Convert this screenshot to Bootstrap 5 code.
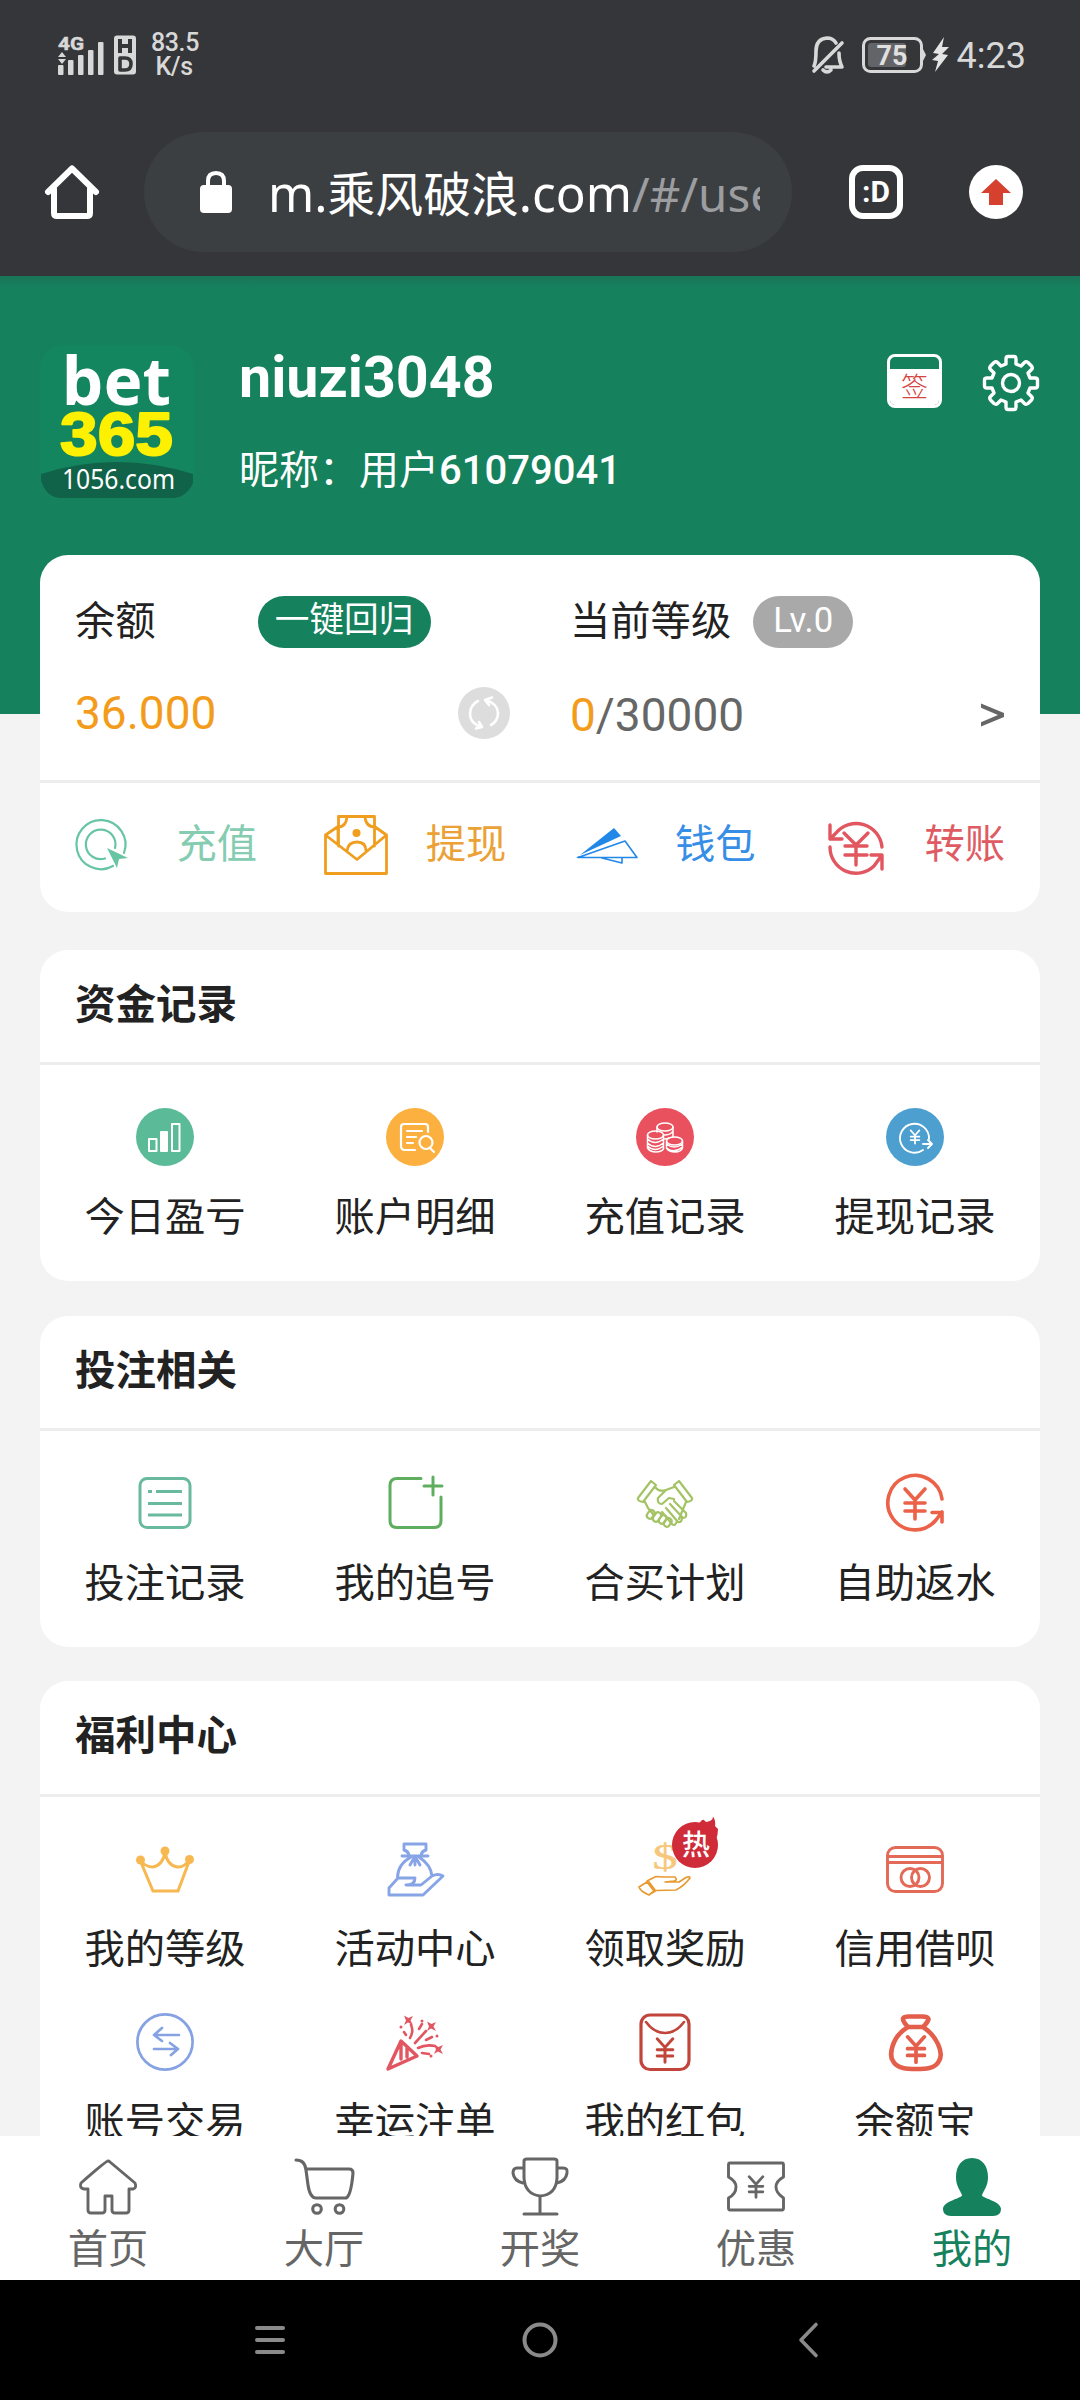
<!DOCTYPE html>
<html lang="zh-CN">
<head>
<meta charset="utf-8">
<meta name="viewport" content="width=device-width, initial-scale=1">
<title>我的</title>
<link href="https://cdn.jsdelivr.net/npm/bootstrap@5.3.0/dist/css/bootstrap.min.css" rel="stylesheet">
<style>
:root{--brand:#15815d}
body{font-family:Roboto,"Noto Sans CJK SC",sans-serif;font-size:40.3px;line-height:1.5;color:#222;background:#f3f3f3}
svg{display:block;overflow:visible;fill:none;stroke-linecap:round;stroke-linejoin:round;flex-shrink:0}
.screen{width:1080px;height:2400px}
.chrome-top{height:276px;background:#35363a}
.status{height:132px;padding:0 54px 0 58px;color:#d8d8d8}
.status-left,.status-right{height:109px}
.net-speed{font-size:25px;line-height:24px;width:46px;margin-left:15px;font-weight:500;letter-spacing:-.4px}
.clock{font-size:36px;line-height:40px;margin-left:8px;padding-top:2px}
.tools{height:120px;padding:0 57px 0 45px}
.url-pill{width:648px;height:120px;border-radius:60px;background:#3c3f42;margin-left:45px;padding:0 31px 0 56px;color:#fff}
.url-text{width:492px;margin-left:36px;padding-top:2px;font:400 49.5px/70px "Noto Sans","Noto Sans CJK SC",sans-serif}
.url-text .han{font-size:47.8px}
.url-text .path{color:#9b9da0;font-size:47.5px}
.tab-count{width:54px;height:54px;border:6px solid #fff;border-radius:14px;font:700 30px/36px Roboto,sans-serif;color:#fff;margin-left:57px}
.page-body{height:1860px}
.hero{height:438px;background:linear-gradient(#1a7458 0,var(--brand) 12px);padding:69px 40px 0;color:#fff}
.who{margin-left:45px}
.uname{font-size:57.4px;font-weight:700;line-height:66px;margin-top:0}
.nick{font-size:40px;line-height:60px;margin-top:30px}
.nick b{font-weight:500}
.hero-icons{gap:40px;margin-top:9px}
.sign{width:55px;height:54px;border:3px solid #fff;border-radius:8px;overflow:hidden}
.sign-head{height:12px}
.sign-body{background:#fff;color:#d5453f;font-size:27px;line-height:39px;font-weight:300;height:38px}
.panel{background:#fff;border-radius:28px;margin:0 40px 35px}
.wallet{height:357px;margin-top:-159px;margin-bottom:38px;padding-top:41px}
.wallet-cols{height:187px;border-bottom:3px solid #ededed;padding:0 36px 0 35px}
.wl{width:435px;margin-right:60px}
.line-a{height:52px}
.line-b{height:60px;margin-top:35px;font-size:46px;line-height:60px}
.pill{height:52px;line-height:49px;border-radius:26px;font-size:34.7px;color:#fff;text-align:center}
.pill-back{width:173px;background:var(--brand);margin-left:102px}
.pill-lv{width:100px;background:#a9a9a9;margin-left:22px}
.amt{color:#f39c1c}
.gry{color:#666}
.acts{height:129px;padding:0 35px}
.act{width:182px;height:124px}
.panel-title{height:115px;border-bottom:3px solid #ededed;padding:1px 35px 0;font-size:40.5px;font-weight:700;line-height:109px}
.tall{height:116px}
.grid-body{padding-top:43px}
.cell{padding-bottom:33px}
.cell span{margin-top:22px;line-height:60px;height:60px}
.ico{width:58px;height:58px}
.tabbar{height:144px;background:#fff;color:#666}
.tabbar svg{stroke:#666;margin-top:3px}
.tabbar .cap{line-height:60px;margin-top:-3px}
.tabbar .on{color:var(--brand)}
.sysbar{height:120px;background:#000}
.sysbar svg{stroke:#8a8a8a}
.sys-menu{margin-right:236px}
.sys-back{margin-left:236px}
.logo-t{font-family:"Noto Sans",sans-serif;stroke:none}
</style>
</head>
<body>
<svg width="0" height="0" class="position-absolute"><defs>
<symbol id="yen" viewBox="0 0 22 32" overflow="visible"><path d="M1 1 11 12 21 1M11 12V31M1 15H21M1 23H21"/></symbol>
</defs></svg>
<div class="screen d-flex flex-column overflow-hidden">
 <header class="chrome-top">
  <div class="status d-flex justify-content-between">
   <div class="status-left d-flex align-items-center">
    <svg width="46" height="40" viewBox="0 0 46 40"><g fill="#d8d8d8"><text x="0" y="15" font-size="18" font-weight="700" textLength="26" lengthAdjust="spacingAndGlyphs" font-family="Roboto" stroke="#d8d8d8" stroke-width=".5">4G</text><path d="M4 17 8 22H0zM0 24H8L4 29z"/><rect y="30" width="5.5" height="10" rx="1"/><rect x="10" y="25" width="5.5" height="15" rx="1"/><rect x="20" y="20" width="5.5" height="20" rx="1"/><rect x="30" y="15" width="5.5" height="25" rx="1"/><rect x="40" y="7" width="5.5" height="33" rx="1"/></g></svg>
    <svg class="ms-2" width="24" height="40" viewBox="-2 0 24 40"><rect y="0.5" width="22" height="39" rx="3" fill="#d8d8d8"/><path d="M6 4V18M16 4V18M6 11H16" stroke="#35363a" stroke-width="4" stroke-linecap="butt"/><path d="M6 23V35H11Q17 35 17 29 17 23 11 23Z" stroke="#35363a" stroke-width="3.6"/></svg>
    <div class="net-speed text-center">83.5<br>K/s</div>
   </div>
   <div class="status-right d-flex align-items-center">
    <svg width="34" height="38" viewBox="0 0 34 38" stroke="#d8d8d8" stroke-width="3.6"><path d="M3 30Q5 26 5 15 5 3 16 2 22 2 25 7M28 17Q28 25 31 31H15M3 35 31 7M12 34Q16 38 20 34"/></svg>
    <svg class="ms-3" width="66" height="38" viewBox="0 0 66 38"><rect x="2.5" y="2.5" width="58" height="33" rx="7" stroke="#d8d8d8" stroke-width="3"/><rect x="7" y="7" width="38" height="24" rx="3" fill="#636467"/><path d="M62 13 65 19 62 25z" fill="#d8d8d8"/><text x="31" y="29" text-anchor="middle" font-family="Roboto" font-size="27" font-weight="700" fill="#e0e0e0">75</text></svg>
    <svg class="ms-1" width="18" height="36" viewBox="0 0 18 36"><path d="M13 0 2 16 8 17 1 23 7 24 4 35 17 18 11 17 18 10 11 10z" fill="#e4e4e4"/></svg>
    <div class="clock">4:23</div>
   </div>
  </div>
  <div class="tools d-flex align-items-center">
   <svg width="54" height="54" viewBox="0 0 54 54" stroke="#fff" stroke-width="6"><path d="M3 27 27 3.500 51 27M9 24V48Q9 51 12 51H42Q45 51 45 48V24"/></svg>
   <div class="url-pill d-flex align-items-center">
    <svg width="32" height="42" viewBox="0 0 32 42"><rect y="14" width="32" height="28" rx="4" fill="#fff"/><path d="M8 16V10Q8 2 16 2 24 2 24 10V16" stroke="#fff" stroke-width="4"/></svg>
    <div class="url-text text-nowrap overflow-hidden">m.<span class="han">乘风破浪</span>.com<span class="path">/#/use</span></div>
   </div>
   <div class="tab-count d-flex align-items-center justify-content-center">:D</div>
   <svg class="ms-auto" width="54" height="54" viewBox="0 0 54 54"><circle cx="27" cy="27" r="27" fill="#fff"/><path d="M27 14 42 28H34V40H20V28H12z" fill="#d5402f"/></svg>
  </div>
 </header>

 <main class="page-body overflow-hidden">
  <section class="hero d-flex align-items-start">
   <svg width="154" height="154" viewBox="0 0 154 154"><rect width="154" height="153" rx="24" fill="#14865f"/><path d="M1 129Q77 105 153 129V138Q146 153 132 153H22Q6 153 1 135Z" fill="#106249"/><g class="logo-t"><text x="22" y="60" font-size="67" font-weight="700" fill="#fff" textLength="109" lengthAdjust="spacingAndGlyphs">bet</text><text x="20" y="110" font-family="Liberation Sans" font-size="62" font-weight="700" fill="#fdf000" style="stroke:#fdf000" stroke-width="2" textLength="113" lengthAdjust="spacingAndGlyphs">365</text><text x="22" y="144" font-size="27" fill="#fff" textLength="113" lengthAdjust="spacingAndGlyphs">1056.com</text></g></svg>
   <div class="who"><div class="uname">niuzi3048</div><div class="nick">昵称：用户<b>61079041</b></div></div>
   <div class="hero-icons ms-auto d-flex">
    <div class="sign text-center"><div class="sign-head"></div><div class="sign-body">签</div></div>
    <svg width="58" height="58" viewBox="-29 -29 58 58" stroke="#fff" stroke-width="3.400"><circle r="8.500"/><path d="M-5-19V-24Q-5-26.500-3-26.500H3Q5-26.500 5-24V-19L10-17 13.500-20.500Q15-22 17-20.500L20.500-17Q22-15 20.500-13.500L17-10 19-5H24Q26.500-5 26.500-3V3Q26.500 5 24 5H19L17 10 20.500 13.500Q22 15 20.500 17L17 20.500Q15 22 13.500 20.500L10 17 5 19V24Q5 26.500 3 26.500H-3Q-5 26.500-5 24V19L-10 17-13.500 20.500Q-15 22-17 20.500L-20.500 17Q-22 15-20.500 13.500L-17 10-19 5H-24Q-26.500 5-26.500 3V-3Q-26.500-5-24-5H-19L-17-10-20.500-13.500Q-22-15-20.500-17L-17-20.500Q-15-22-13.500-20.500L-10-17Z"/></svg>
   </div>
  </section>

  <section class="panel wallet position-relative">
   <div class="wallet-cols d-flex">
    <div class="wl">
     <div class="line-a d-flex align-items-center"><span>余额</span><span class="pill pill-back">一键回归</span></div>
     <div class="line-b d-flex align-items-center justify-content-between amt"><span>36.000</span><svg width="52" height="52" viewBox="0 0 52 52" stroke="#fff" stroke-width="2.600"><circle cx="26" cy="26" r="26" fill="#ddd" stroke="none"/><path d="M20 14Q12 18 12 27 12 36 23 40M18 41.500 24 40 21 35M33 38Q40 34 40 26 40 17 28 13M34 10.500 27 13 31 18"/></svg></div>
    </div>
    <div class="flex-grow-1">
     <div class="line-a d-flex align-items-center"><span>当前等级</span><span class="pill pill-lv">Lv.0</span></div>
     <div class="line-b d-flex align-items-center justify-content-between gry"><span class="pt-1"><span class="amt">0</span>/30000</span><svg class="mt-1" width="23" height="26" viewBox="0 0 23 26"><path d="M0 1.500V5.800L17 13 0 20.200V24.500L23 14.900V11.100z" fill="#666"/></svg></div>
    </div>
   </div>
   <div class="acts d-flex justify-content-between">
    <div class="act d-flex align-items-center justify-content-between" style="color:#86ccb1"><svg width="54" height="52" viewBox="0 0 54 52" stroke="#68c5a4" stroke-width="2.200"><path d="M49 34A24.500 24.500 0 1 0 38 47M40 29A14.800 14.800 0 1 0 30 39.500"/><path d="M32 29 53 39 44 40 42 49z" fill="#68c5a4" stroke="none"/></svg><span>充值</span></div>
    <div class="act d-flex align-items-center justify-content-between" style="color:#eba136"><svg width="64" height="60" viewBox="0 0 64 60" stroke="#f09e20" stroke-width="2.800" stroke-linejoin="miter"><path d="M1.500 20V58.500H62.500V20L33 44.500 1.500 20 14 11.500V28M62.500 20 50.500 11.500V28M14.500 31V1.500H50.500V31M14 12Q22 12 23 2M51 12Q42 12 41 2M23 36Q24 27 33 27 42 27 42 36"/><circle cx="32.500" cy="18" r="4" fill="#f09e20" stroke="none"/></svg><span>提现</span></div>
    <div class="act d-flex align-items-center justify-content-between" style="color:#378ee6"><svg width="64" height="40" viewBox="-2 -2 64 40"><path d="M4 28 38 1 45 9zM0 31 3 29 10 30z" fill="#2288e8"/><path d="M2 30.500 49 14 61 30.500zM26 31 46 36V31" stroke="#2288e8" stroke-width="1.600"/></svg><span>钱包</span></div>
    <div class="act d-flex align-items-center justify-content-between" style="color:#df5b63"><svg width="60" height="56" viewBox="-5 -3 60 56" stroke="#e25660" stroke-width="3.400"><path d="M2 27A26 26 0 0 0 46 46M54 27A26 26 0 0 0 8 13M2 5V19H14M2 19 8 13M43 35H54V49M54 35 46 46M16 13 28 25 40 13M28 25V45M17 26H39M17 35H39"/></svg><span>转账</span></div>
   </div>
  </section>

  <section class="panel">
   <div class="panel-title">资金记录</div>
   <div class="grid-body row g-0">
    <div class="cell col-3 d-flex flex-column align-items-center"><svg class="ico" viewBox="0 0 58 58" stroke="#fff" stroke-width="2"><circle cx="29" cy="29" r="29" fill="#5bbb99" stroke="none"/><rect x="13" y="31" width="7.500" height="12"/><rect x="25" y="24" width="6" height="19" fill="#fff"/><rect x="36" y="16" width="7.500" height="27"/></svg><span>今日盈亏</span></div>
    <div class="cell col-3 d-flex flex-column align-items-center"><svg class="ico" viewBox="0 0 58 58" stroke="#fff" stroke-width="2.200"><circle cx="29" cy="29" r="29" fill="#fbb03f" stroke="none"/><path d="M29 42H19Q15 42 15 38V19Q15 16 18 16H39Q42 16 42 19V24M21 23H36M21 29H30M21 35H27M44 40 48 44"/><circle cx="40" cy="34.500" r="6.500"/></svg><span>账户明细</span></div>
    <div class="cell col-3 d-flex flex-column align-items-center"><svg class="ico" viewBox="0 0 58 58" stroke="#fff" stroke-width="1.500"><circle cx="29" cy="29" r="29" fill="#e9515e" stroke="none"/><ellipse cx="29" cy="19" rx="8" ry="4"/><path d="M37 19V29M21 19V24M28 27Q35 27 37 23M28 31Q31 31 33 30"/><ellipse cx="19.500" cy="27" rx="8" ry="4"/><path d="M11.500 27V40Q14 44 20 44 25 44 27.500 41V27M11.500 31Q19 38 27.500 31M11.500 35Q19 42 27.500 35M11.500 38Q19 45 27.500 38"/><ellipse cx="38.500" cy="33" rx="8" ry="4"/><path d="M30.500 33V40Q33 44 39 44 45 44 46.500 40V33M30.500 36Q38 42 46.500 36M30.500 40Q38 46 46.500 39"/></svg><span>充值记录</span></div>
    <div class="cell col-3 d-flex flex-column align-items-center"><svg class="ico" viewBox="0 0 58 58" stroke="#fff" stroke-width="1.900"><circle cx="29" cy="29" r="29" fill="#4d9fd0" stroke="none"/><path d="M43 31A14.500 14.500 0 1 0 37 42M37 36H46M42 32 46 36 42 40"/><use href="#yen" x="23" y="22" width="12" height="14" stroke-width="4"/></svg><span>提现记录</span></div>
   </div>
  </section>

  <section class="panel mb-0">
   <div class="panel-title">投注相关</div>
   <div class="grid-body row g-0">
    <div class="cell col-3 d-flex flex-column align-items-center"><svg class="ico" viewBox="0 0 58 58" stroke="#68b99e" stroke-width="3"><rect x="4" y="4.500" width="50" height="49" rx="7"/><path d="M12 17.500H16M20 17.500H46M12 29.500H46M12 41H46" stroke-linecap="butt"/></svg><span>投注记录</span></div>
    <div class="cell col-3 d-flex flex-column align-items-center"><svg class="ico" viewBox="0 0 58 58" stroke="#5fae60" stroke-width="3" stroke-linecap="butt"><path d="M35 4.500H11Q4 4.500 4 11.500V46.500Q4 53.500 11 53.500H48Q55 53.500 55 46.500V23M38 12H56M47 3V21"/></svg><span>我的追号</span></div>
    <div class="cell col-3 d-flex flex-column align-items-center"><svg class="ico" viewBox="0 0 58 58" stroke="#a3c364" stroke-width="2.200"><path d="M2 24 15 7 20 11 7 28Q1 27 2 24ZM56 24 43 7 38 11 51 28Q57 27 56 24ZM20 14Q23 18 30 16L38 13M9 28 12 34 17 40M50 28 43 45M30 16 22 24Q21 30 26 30L33 24 38 25M38 27 50 39Q51 44 47 44L34 30M46 43Q46 49 42 48L30 34M41 47Q39 53 36 50L26 38"/><rect x="12" y="36" width="6" height="9" rx="3" transform="rotate(35 15 40)"/><rect x="18" y="38" width="6" height="10" rx="3" transform="rotate(35 21 43)"/><rect x="24" y="41" width="6" height="9" rx="3" transform="rotate(35 27 45)"/><rect x="29" y="44" width="6" height="9" rx="3" transform="rotate(35 32 48)"/></svg><span>合买计划</span></div>
    <div class="cell col-3 d-flex flex-column align-items-center"><svg class="ico" viewBox="0 0 58 58" stroke="#eb6249" stroke-width="3.600"><path d="M56 25A27.200 27.200 0 1 0 50 46L56 38M46 38.500H56V48"/><use href="#yen" x="18" y="14" width="22" height="32"/></svg><span>自助返水</span></div>
   </div>
  </section>

  <section class="panel mb-0" style="margin-top:34px">
   <div class="panel-title tall">福利中心</div>
   <div class="grid-body row g-0">
    <div class="cell col-3 d-flex flex-column align-items-center"><svg class="ico" viewBox="0 0 58 58" stroke="#f8b851" stroke-width="3"><path d="M4 20 17 51H42L54 19Q48 28 41 27 31 25 29 12 27 25 17 27 9 27 4 20Z" stroke-linejoin="miter"/><g fill="#f8b851" stroke="none"><circle cx="4.500" cy="20" r="4.500"/><circle cx="29" cy="11" r="4.500"/><circle cx="53.500" cy="19.500" r="4.500"/></g></svg><span>我的等级</span></div>
    <div class="cell col-3 d-flex flex-column align-items-center"><svg class="ico" viewBox="0 0 58 58" stroke="#86a4e6" stroke-width="2.900" stroke-linejoin="miter"><path d="M23 15Q22 11 18 10V4H40V10Q36 11 35 15M16 16H42M25 17Q12 24 11.500 37M33 17Q45 25 46 36M29 17V25M28 18 24 25M30 18 34 25M3 55V48L12 38H29Q29 45 20 45H35L46 36Q52 33 57 36L37 55Z"/></svg><span>活动中心</span></div>
    <div class="cell col-3 d-flex flex-column align-items-center"><svg class="ico" viewBox="0 0 58 58" stroke="#e89a30" stroke-width="1.700"><text x="29" y="29" text-anchor="middle" font-family="Liberation Serif" font-size="35" textLength="25" lengthAdjust="spacingAndGlyphs" fill="#f7c77b" stroke="#f7c77b" stroke-width=".4">$</text><path d="M11 41 20 36.500 27 37H39Q42 40 38 41L29 42H43L50 37.500Q54 36 54 38 48 46 40 50L20 50.500 16 53M11 42 3 47Q4 51 13 55L18 51ZM13 42 19 50"/><circle cx="59" cy="5" r="23" fill="#cf2b38" stroke="none"/><path d="M63-16Q66-21 68-20L70-18Q77-19 77-23.500 80-19 79-14L82-11Q82-5 80-1L60-14z" fill="#cf2b38" stroke="none"/><text x="60" y="15" text-anchor="middle" font-size="28" font-weight="500" fill="#fff" stroke="none">热</text></svg><span>领取奖励</span></div>
    <div class="cell col-3 d-flex flex-column align-items-center"><svg class="ico" viewBox="0 0 58 58" stroke="#e26a57" stroke-width="2.900"><rect x="1.500" y="7.500" width="55" height="44" rx="8"/><path d="M2 16.500H56M2 22.500H56"/><circle cx="24" cy="37.500" r="9"/><circle cx="34.500" cy="37.500" r="9"/></svg><span>信用借呗</span></div>
    <div class="cell col-3 d-flex flex-column align-items-center"><svg class="ico" viewBox="0 0 58 58" stroke="#86a2e3" stroke-width="2.700"><circle cx="29" cy="29" r="27.600"/><path d="M43 22H18L26 15M18 22 26 28M18 36H42L34 30M42 36 35 42"/></svg><span>账号交易</span></div>
    <div class="cell col-3 d-flex flex-column align-items-center"><svg class="ico" viewBox="0 0 58 58" stroke="#e25661" stroke-width="3.400"><path d="M2 56 15 28 31 43ZM15 30V46M21 35V44"/><path d="M24 25Q28 18 25 12M29 30 40 18M32 35Q40 31 49 33M18 19 20 22M33 16 36 11M40 27 46 24M36 40 43 41" stroke-width="2.600"/><g fill="#e25661" stroke="none"><path id="spark" d="M18 2.500 22.500 5 27 3 24.500 7.500 27 12 22 9.500 18 12 20 7.500z"/><use href="#spark" x="23" y="6"/><use href="#spark" x="30" y="29"/><circle cx="15" cy="14" r="1.500"/><circle cx="36" cy="8" r="1.500"/><circle cx="51" cy="23" r="1.500"/><circle cx="45" cy="43" r="1.500"/></g></svg><span>幸运注单</span></div>
    <div class="cell col-3 d-flex flex-column align-items-center"><svg class="ico" viewBox="0 0 58 58" stroke="#c2453b" stroke-width="3.200"><rect x="5" y="2" width="48" height="54.500" rx="9"/><path d="M10 9Q18 20 29 20 40 20 48 9" stroke-width="2.600"/><use href="#yen" x="19" y="25" width="20" height="25" stroke-width="3.800"/></svg><span>我的红包</span></div>
    <div class="cell col-3 d-flex flex-column align-items-center"><svg class="ico" viewBox="0 0 58 58" stroke="#e45f4b" stroke-width="4.600"><path d="M22 14Q17 9 17 5.500 18 3.500 23 3.500H36Q42 3.500 42.500 6 42 9 37 14ZM22 14C5 24 3 43 7 48 11 56 22 56 30 56 39 56 49 56 53 48 58 40 51 23 37 14"/><use href="#yen" x="20" y="23" width="20" height="27" stroke-width="4.400"/></svg><span>余额宝</span></div>
   </div>
  </section>
 </main>

 <nav class="tabbar d-flex">
  <div class="flex-fill w-25 d-flex flex-column align-items-center pt-3"><svg width="58" height="68" viewBox="0 -2 58 68" stroke-width="2.900"><path d="M29 4Q27 4 2 26 0 31 5 32H9V53Q9 56 12 56H23Q26 56 26 53V39H33V53Q33 56 36 56H47Q50 56 50 53V32H54Q58 31 56 26L31 5Q30 4 29 4Z"/></svg><span class="cap">首页</span></div>
  <div class="flex-fill w-25 d-flex flex-column align-items-center pt-3"><svg width="60" height="68" viewBox="0 -2 60 68" stroke-width="3.100"><path d="M2 3Q11 3 12 13L14 28Q16 41 22 41H52Q57 39 59 16 59 12 55 12H13"/><circle cx="23" cy="52" r="4.300"/><circle cx="45.500" cy="52" r="4.300"/></svg><span class="cap">大厅</span></div>
  <div class="flex-fill w-25 d-flex flex-column align-items-center pt-3"><svg width="58" height="68" viewBox="0 -2 58 68" stroke-width="3"><path d="M13 4Q13 2 16 2H43Q46 2 46 4V21Q45 38 29 39 14 37 13 21ZM29 39V57M13 57H46M13 11H6Q2 11 2 16 3 24 12 26M46 11H52Q57 11 56 16 55 24 46 26"/></svg><span class="cap">开奖</span></div>
  <div class="flex-fill w-25 d-flex flex-column align-items-center pt-3"><svg width="58" height="68" viewBox="0 -2 58 68" stroke-width="2.900"><path d="M3 6H55Q56.500 6 56.500 8V20Q49 24 49 30 49 36 56.500 41V51Q56.500 53 55 53H3Q1.500 53 1.500 51V41Q9 37 9 30 9 24 1.500 20V8Q1.500 6 3 6Z"/><use href="#yen" x="21" y="19" width="16" height="22" stroke-width="4"/></svg><span class="cap">优惠</span></div>
  <div class="flex-fill w-25 d-flex flex-column align-items-center pt-3 on"><svg width="58" height="68" viewBox="0 -2 58 68"><path d="M29 1C18 1 13 10 13 20 13 29 17 33 19 38 20 41 0 44 0 52Q0 59 8 59H50Q58 59 58 52C58 44 38 41 39 38 41 33 45 29 45 20 45 10 40 1 29 1Z" fill="#15815d" stroke="none"/></svg><span class="cap">我的</span></div>
 </nav>
 <footer class="sysbar d-flex align-items-center justify-content-center">
  <svg class="sys-menu" width="32" height="32" viewBox="0 0 32 32" stroke-width="4"><path d="M3 4H29M3 16H29M3 28H29"/></svg>
  <svg width="36" height="36" viewBox="0 0 36 36" stroke-width="4"><circle cx="18" cy="18" r="15.500"/></svg>
  <svg class="sys-back" width="32" height="36" viewBox="0 0 32 36" stroke-width="3.600"><path d="M22 2.500 7 18 22 33.500"/></svg>
 </footer>
</div>
<script src="https://cdn.jsdelivr.net/npm/bootstrap@5.3.0/dist/js/bootstrap.bundle.min.js"></script>
</body>
</html>
